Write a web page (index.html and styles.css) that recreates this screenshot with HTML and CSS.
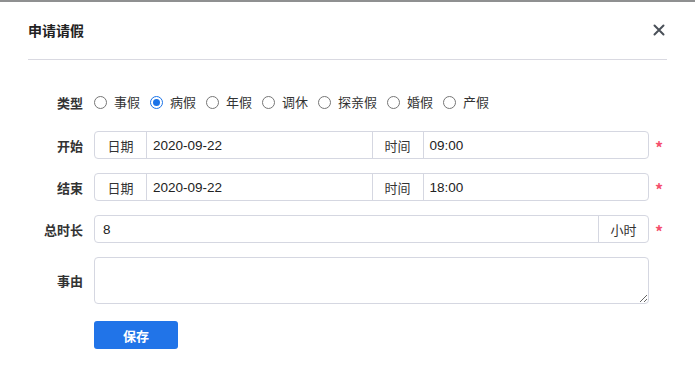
FILE: index.html
```html
<!DOCTYPE html>
<html>
<head>
<meta charset="utf-8">
<link rel="stylesheet" href="styles.css">
</head>
<body>
<div class="topline"></div>
<div class="dialog">
  <div class="header">
    <div class="title">申请请假</div>
    <svg class="close" width="12" height="12" viewBox="0 0 12 12"><path d="M1.5 1.5 L10.5 10.5 M10.5 1.5 L1.5 10.5" stroke="#4a5058" stroke-width="2" stroke-linecap="round"/></svg>
  </div>
  <div class="form">
    <div class="row radio-row">
      <div class="label">类型</div>
      <div class="radios">
        <label class="opt"><span class="radio"></span>事假</label>
        <label class="opt"><span class="radio on"></span>病假</label>
        <label class="opt"><span class="radio"></span>年假</label>
        <label class="opt"><span class="radio"></span>调休</label>
        <label class="opt"><span class="radio"></span>探亲假</label>
        <label class="opt"><span class="radio"></span>婚假</label>
        <label class="opt"><span class="radio"></span>产假</label>
      </div>
    </div>
    <div class="row">
      <div class="label">开始</div>
      <div class="group">
        <div class="addon">日期</div>
        <div class="field">2020-09-22</div>
        <div class="addon">时间</div>
        <div class="field">09:00</div>
      </div>
      <span class="req">*</span>
    </div>
    <div class="row">
      <div class="label">结束</div>
      <div class="group">
        <div class="addon">日期</div>
        <div class="field">2020-09-22</div>
        <div class="addon">时间</div>
        <div class="field">18:00</div>
      </div>
      <span class="req">*</span>
    </div>
    <div class="row">
      <div class="label">总时长</div>
      <div class="group">
        <div class="field wide">8</div>
        <div class="addon small">小时</div>
      </div>
      <span class="req">*</span>
    </div>
    <div class="row ta-row">
      <div class="label">事由</div>
      <textarea class="ta"></textarea>
    </div>
    <div class="row btn-row">
      <div class="label"></div>
      <button class="save">保存</button>
    </div>
  </div>
</div>
</body>
</html>
```
FILE: styles.css
```css
* { box-sizing: border-box; }
body {
  margin: 0;
  background: #fff;
  font-family: "Noto Sans CJK SC", "Liberation Sans", sans-serif;
  color: #333;
  font-size: 13px;
}
.topline { height: 2px; background: #8f9091; }
.dialog { padding: 0 28px 0 28px; }
.header {
  height: 58px;
  border-bottom: 1px solid #d9d9e1;
  display: flex;
  align-items: center;
  justify-content: space-between;
}
.title { font-size: 14px; font-weight: bold; color: #222; margin-top: -2px; }
.close { margin-right: 2px; margin-top: -2px; }
.form { padding-top: 32px; }
.row { display: flex; align-items: center; margin-bottom: 14px; }
.label {
  width: 55px;
  text-align: right;
  font-weight: bold;
  color: #333;
  margin-right: 11px;
  flex: none;
}
.radio-row { height: 20px; margin-bottom: 19px; }
.radios { display: flex; align-items: center; }
.opt { display: flex; align-items: center; margin-right: 10px; color: #333; line-height: 20px; }
.radio {
  width: 13px; height: 13px;
  border: 1px solid #767676;
  border-radius: 50%;
  margin-right: 7px;
  position: relative;
  flex: none;
}
.radio.on { border: 1px solid #1a73e8; }
.radio.on::after {
  content: "";
  position: absolute;
  left: 2px; top: 2px;
  width: 7px; height: 7px;
  border-radius: 50%;
  background: #1a73e8;
}
.group {
  width: 555px;
  height: 28px;
  border: 1px solid #d5d7e1;
  border-radius: 4px;
  display: flex;
  flex: none;
}
.addon {
  width: 51px;
  flex: none;
  display: flex;
  align-items: center;
  justify-content: center;
  color: #333;
}
.field {
  flex: 1;
  display: flex;
  align-items: center;
  padding-left: 6px;
  border-left: 1px solid #d5d7e1;
  color: #222;
  font-family: "Liberation Sans", "Noto Sans CJK SC", sans-serif;
  font-size: 13.5px;
}
.group .field + .addon { border-left: 1px solid #d5d7e1; }
.group .field:first-child { border-left: none; padding-left: 8px; }
.addon.small { width: 50px; }
.req { color: #f5506e; margin-left: 6px; font-size: 16px; font-weight: bold; line-height: 1; margin-top: 4px; }
.ta-row { margin-bottom: 17px; }
.ta {
  width: 555px;
  height: 47px;
  border: 1px solid #d5d7e1;
  border-radius: 4px;
  margin: 0;
  display: block;
}
.save {
  width: 84px;
  height: 28px;
  background: #2174e8;
  border: none;
  border-radius: 3px;
  color: #fff;
  font-weight: bold;
  font-size: 13px;
  font-family: "Noto Sans CJK SC", sans-serif;
  padding: 0;
}
```
